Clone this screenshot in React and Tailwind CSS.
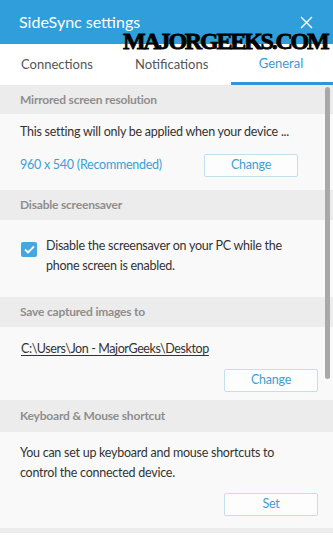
import React from 'react';

const FONT = "font-['Lato','Open_Sans',sans-serif]";

const SectionHeader = ({ title, h = 'h-[30px]' }) => (
    <div className={`${h} flex items-center px-5 bg-[#ececec] text-[12px] tracking-[-0.2px] font-bold text-[#8e8e8e]`}>
        {title}
    </div>
);

const OutlineButton = ({ children }) => (
    <button className="w-[94px] h-[23px] rounded-[2px] border border-[#c3dfee] bg-[#fdfdfd] text-[12.5px] text-[#3c9fd6] flex items-center justify-center">
        {children}
    </button>
);

const App = () => {
    return (
        <div className={`relative w-[333px] h-[537px] overflow-hidden bg-white ${FONT}`}>
            {/* title bar */}
            <div className="h-[44px] bg-[#2f9edb] flex items-center justify-between pl-[19px] pr-[20px]">
                <span className="text-white text-[16px] leading-none">SideSync settings</span>
                <svg width="13" height="13" viewBox="0 0 13 13" className="text-white">
                    <path d="M1 1L12 12M12 1L1 12" stroke="currentColor" strokeWidth="1.4" fill="none" />
                </svg>
            </div>

            {/* tabs */}
            <div className="h-[41px] flex items-stretch text-[13px] text-[#555]">
                <div className="w-[113px] flex items-center pl-[21px] pt-[1px]">Connections</div>
                <div className="w-[118px] flex items-center pl-[22px] pt-[1px]">Notifications</div>
                <div className="flex-1 flex items-center justify-center pr-[2px] pt-[1px] text-[#3a9ad8] border-b-[3px] border-[#2e97d7]">
                    General
                </div>
            </div>

            {/* settings list */}
            <div className="bg-[#f9f9f9] text-[12.5px] tracking-[-0.25px] text-[#333]">
                <SectionHeader title="Mirrored screen resolution" h="h-[29px]" />
                <div className="h-[76px] px-5 pt-[8px]">
                    <div className="leading-[20px] whitespace-nowrap">This setting will only be applied when your device ...</div>
                    <div className="flex items-center justify-between mt-[12px] pr-[15px]">
                        <span className="text-[#3a9fd8]">960 x 540 (Recommended)</span>
                        <OutlineButton>Change</OutlineButton>
                    </div>
                </div>

                <SectionHeader title="Disable screensaver" />
                <div className="h-[77px] pl-[21px] pr-5 pt-[16px] flex gap-[9px]">
                    <div className="mt-[6px] w-[16px] h-[15px] shrink-0 rounded-[2px] bg-[#46a6e0] flex items-center justify-center">
                        <svg width="11" height="9" viewBox="0 0 11 9">
                            <path d="M1 4.5L4 7.5L10 1.5" stroke="white" strokeWidth="1.8" fill="none" />
                        </svg>
                    </div>
                    <div className="leading-[20px] w-[240px]">
                        Disable the screensaver on your PC while the phone screen is enabled.
                    </div>
                </div>

                <SectionHeader title="Save captured images to" />
                <div className="h-[73px] pl-[21px] pr-[15px] pt-[12px]">
                    <div className="leading-[20px] underline underline-offset-2 tracking-[-0.4px]">C:\Users\Jon - MajorGeeks\Desktop</div>
                    <div className="flex justify-end mt-[10px]">
                        <OutlineButton>Change</OutlineButton>
                    </div>
                </div>

                <SectionHeader title="Keyboard & Mouse shortcut" h="h-[32px]" />
                <div className="h-[96px] px-5 pr-[15px] pt-[11px]">
                    <div className="leading-[20px] w-[262px]">
                        You can set up keyboard and mouse shortcuts to control the connected device.
                    </div>
                    <div className="flex justify-end mt-[10px]">
                        <OutlineButton>Set</OutlineButton>
                    </div>
                </div>
                <div className="h-[5px] bg-[#ececec]" />
                <div className="h-[10px] bg-white" />
            </div>

            {/* scrollbar thumb */}
            <div className="absolute left-[325px] top-[87px] w-[5px] h-[292px] rounded-full bg-[#a8a8a8]" />

            {/* watermark */}
            <div className="absolute left-[123px] top-[29px] text-[24px] leading-none font-black tracking-[-2.2px] text-black font-['Liberation_Serif','DejaVu_Serif',serif] [-webkit-text-stroke:0.8px_black]">
                MAJORGEEKS.COM
            </div>
        </div>
    );
};

export default App;
